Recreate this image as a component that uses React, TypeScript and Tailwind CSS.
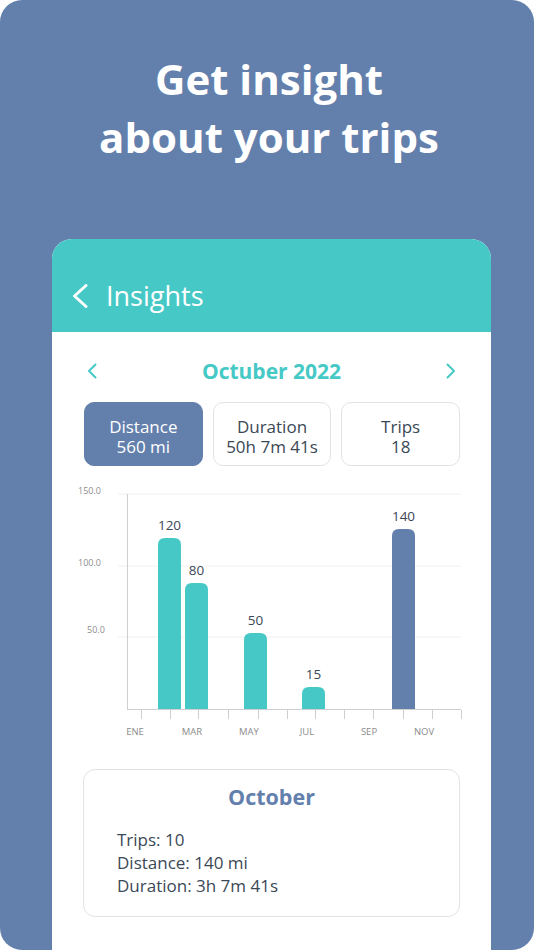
import React from "react";

const BLUE = "#6380ad";
const TEAL = "#46c9c6";

function topRoundedBar(x: number, top: number, w: number, bottom: number, r: number) {
  return `M${x} ${bottom} L${x} ${top + r} Q${x} ${top} ${x + r} ${top} L${x + w - r} ${top} Q${x + w} ${top} ${x + w} ${top + r} L${x + w} ${bottom} Z`;
}

function Chart() {
  const bars = [
    { x: 158, top: 538, label: "120", color: TEAL },
    { x: 185, top: 583, label: "80", color: TEAL },
    { x: 244, top: 633, label: "50", color: TEAL },
    { x: 302, top: 687, label: "15", color: TEAL },
    { x: 392, top: 529, label: "140", color: BLUE },
  ];
  const ticks = [141, 170, 198, 228, 258, 287, 315, 344, 373, 403, 432, 461];
  const months = [
    { t: "ENE", x: 135 },
    { t: "MAR", x: 192 },
    { t: "MAY", x: 249 },
    { t: "JUL", x: 307 },
    { t: "SEP", x: 369 },
    { t: "NOV", x: 424 },
  ];
  const font = "'Open Sans', sans-serif";
  return (
    <svg width={439} height={270} viewBox="52 478 439 270" className="block">
      {[494, 566, 637].map((y) => (
        <line key={y} x1={118} x2={461} y1={y} y2={y} stroke="#f0f0f0" strokeWidth={1} />
      ))}
      <text x={78} y={494} fontSize={9} fill="#8c8c8c" fontFamily={font}>150.0</text>
      <text x={78} y={566} fontSize={9} fill="#8c8c8c" fontFamily={font}>100.0</text>
      <text x={87} y={633} fontSize={9} fill="#8c8c8c" fontFamily={font}>50.0</text>
      <line x1={127.5} x2={127.5} y1={494} y2={710} stroke="#cfcfcf" strokeWidth={1} />
      <line x1={127} x2={461} y1={709.5} y2={709.5} stroke="#cfcfcf" strokeWidth={1} />
      {ticks.map((x) => (
        <line key={x} x1={x + 0.5} x2={x + 0.5} y1={710} y2={719} stroke="#cfcfcf" strokeWidth={1} />
      ))}
      {months.map((m) => (
        <text key={m.t} x={m.x} y={735} fontSize={9.5} fill="#8c8c8c" textAnchor="middle" fontFamily={font}>
          {m.t}
        </text>
      ))}
      {bars.map((b) => (
        <g key={b.label}>
          <path d={topRoundedBar(b.x, b.top, 23, 709, 7)} fill={b.color} />
          <text x={b.x + 11.5} y={b.top - 8} fontSize={13.5} fill="#3b4856" textAnchor="middle" fontFamily={font}>
            {b.label}
          </text>
        </g>
      ))}
    </svg>
  );
}

function Chevron({ dir, color, size, stroke }: { dir: "left" | "right"; color: string; size: number; stroke: number }) {
  return (
    <svg width={size} height={size * 1.6} viewBox="0 0 10 16" fill="none">
      <path
        d={dir === "left" ? "M8.5 1.5 L2 8 L8.5 14.5" : "M1.5 1.5 L8 8 L1.5 14.5"}
        stroke={color}
        strokeWidth={stroke}
        strokeLinecap="round"
        strokeLinejoin="round"
      />
    </svg>
  );
}

export default function App() {
  return (
    <div className="w-[534px] h-[950px] bg-white font-['Open_Sans',sans-serif]">
      <div className="h-full rounded-[22px] bg-[#6380ad] overflow-hidden flex flex-col">
        <h1 className="pt-[50px] pl-[4px] text-center text-white font-bold text-[42px] leading-[58px]">
          Get insight
          <br />
          about your trips
        </h1>
        <div className="mt-[73px] ml-[52px] w-[439px] flex-1 bg-white rounded-t-[20px] overflow-hidden">
          <div className="h-[93px] bg-[#46c9c6] flex items-start pt-[41px] pl-[20px]">
            <div className="mt-[4px] mr-[18px]">
              <svg width={16} height={24} viewBox="0 0 16 24" fill="none">
                <path d="M14 1.5 L2.5 12 L14 22.5" stroke="white" strokeWidth={3} strokeLinecap="round" strokeLinejoin="round" />
              </svg>
            </div>
            <span className="text-white text-[27px] leading-[32px]">Insights</span>
          </div>
          <div className="mt-[27px] flex items-center justify-between pl-[35px] pr-[35px] h-[24px]">
            <Chevron dir="left" color={TEAL} size={10} stroke={2} />
            <span className="text-[#46c9c6] font-bold text-[21px] leading-[24px]">Octuber 2022</span>
            <Chevron dir="right" color={TEAL} size={10} stroke={2} />
          </div>
          <div className="mt-[19px] grid grid-cols-3 gap-[10px] pl-[32px] pr-[31px]">
            <div className="h-[64px] rounded-[10px] bg-[#6380ad] border border-[#6380ad] pt-[14px] text-center text-white text-[17px] leading-[20px]">
              Distance
              <br />
              560 mi
            </div>
            <div className="h-[64px] rounded-[10px] bg-white border border-[#e3e3e3] pt-[14px] text-center text-[#3b4856] text-[17px] leading-[20px]">
              Duration
              <br />
              50h 7m 41s
            </div>
            <div className="h-[64px] rounded-[10px] bg-white border border-[#e3e3e3] pt-[14px] text-center text-[#3b4856] text-[17px] leading-[20px]">
              Trips
              <br />
              18
            </div>
          </div>
          <div className="mt-[12px]">
            <Chart />
          </div>
          <div className="mt-[21px] ml-[31px] w-[377px] h-[148px] rounded-[12px] border border-[#e3e3e3] pt-[13px]">
            <div className="text-center text-[#6380ad] font-bold text-[21.5px] leading-[28px]">October</div>
            <div className="mt-[17px] pl-[33px] text-[#3b4856] text-[17px] leading-[23px]">
              <div>Trips: 10</div>
              <div>Distance: 140 mi</div>
              <div>Duration: 3h 7m 41s</div>
            </div>
          </div>
        </div>
      </div>
    </div>
  );
}
